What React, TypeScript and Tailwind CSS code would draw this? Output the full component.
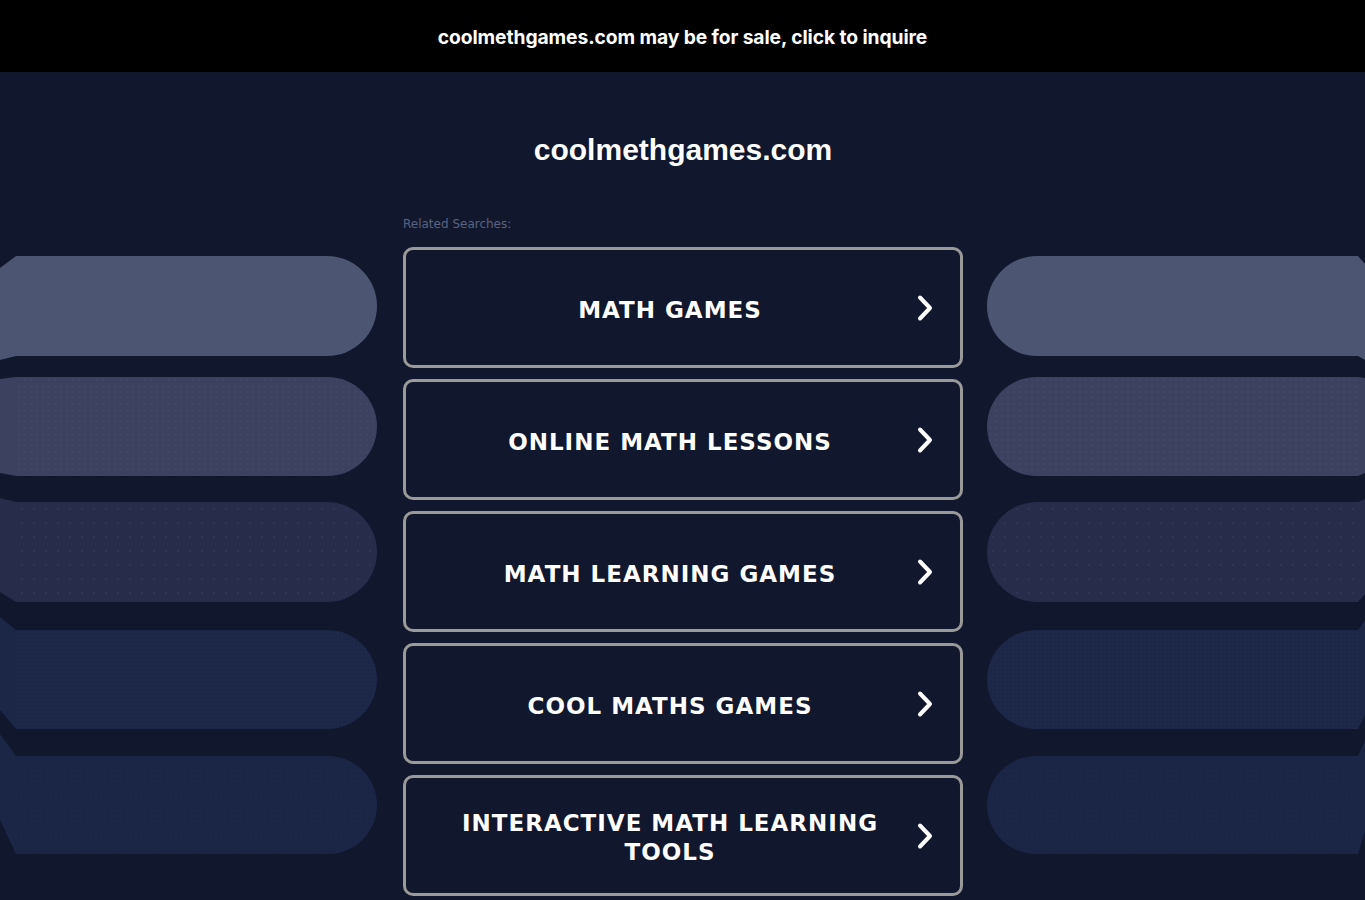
import React from 'react'

const searches = ['MATH GAMES', 'ONLINE MATH LESSONS', 'MATH LEARNING GAMES', 'COOL MATHS GAMES', 'INTERACTIVE MATH LEARNING TOOLS']

// decorative side pills: height, gap above, colour, edge slants at the screen border
const pills = [
  { h: 100, mt: 0, bg: 'bg-[#4c5673]', fill: '#4c5673', l: [12, 104], r: [8, 104], dots: '' },
  { h: 99, mt: 21, bg: 'bg-[#3b415f]', fill: '#3b415f', l: [2, 96], r: [1, 96], dots: 'bg-[radial-gradient(rgba(255,255,255,0.06)_0.6px,transparent_0.8px)] bg-[length:6px_6px]' },
  { h: 100, mt: 26, bg: 'bg-[#262c4a]', fill: '#262c4a', l: [-4, 90], r: [-3, 92], dots: 'bg-[radial-gradient(rgba(255,255,255,0.06)_0.6px,transparent_0.8px)] bg-[length:12px_14px]' },
  { h: 99, mt: 28, bg: 'bg-[#1c2647]', fill: '#1c2647', l: [-13, 80], r: [-10, 85], dots: 'bg-[radial-gradient(rgba(255,255,255,0.03)_0.6px,transparent_0.8px)] bg-[length:4px_4px]' },
  { h: 98, mt: 27, bg: 'bg-[#1b2647]', fill: '#1b2647', l: [-22, 64], r: [-16, 75], dots: 'bg-[radial-gradient(rgba(0,0,0,0.15)_0.6px,transparent_0.8px)] bg-[length:5px_5px]' },
]

function Chevron() {
  return (
    <svg width="16" height="27" viewBox="0 0 16 27" className="absolute right-[27px] top-1/2 -translate-y-1/2">
      <polyline points="3,3 13,13.5 3,24" fill="none" stroke="white" strokeWidth="4" strokeLinecap="round" strokeLinejoin="round" />
    </svg>
  )
}

function LeftPills() {
  return (
    <div className="flex w-[377px] shrink-0 flex-col pt-[184px]">
      {pills.map((p, i) => (
        <div key={i} className={`relative ml-[16px] w-[361px] rounded-r-full ${p.bg}`} style={{ height: p.h, marginTop: p.mt }}>
          <div className={`h-full w-full rounded-r-full ${p.dots}`} />
          <svg width="16" height={p.h} className="absolute left-[-16px] top-0 overflow-visible">
            <polygon points={`0,${p.l[0]} 16,0 16,${p.h} 0,${p.l[1]}`} fill={p.fill} />
          </svg>
        </div>
      ))}
    </div>
  )
}

function RightPills() {
  return (
    <div className="flex flex-1 flex-col pt-[184px]">
      {pills.map((p, i) => (
        <div key={i} className={`relative w-[371px] rounded-l-full ${p.bg}`} style={{ height: p.h, marginTop: p.mt }}>
          <div className={`h-full w-full rounded-l-full ${p.dots}`} />
          <svg width="7" height={p.h} className="absolute left-full top-0 overflow-visible">
            <polygon points={`0,0 7,${p.r[0]} 7,${p.r[1]} 0,${p.h}`} fill={p.fill} />
          </svg>
        </div>
      ))}
    </div>
  )
}

export default function App() {
  return (
    <div className="min-h-[900px] overflow-hidden bg-[#11172c]">
      <div className="flex h-[72px] items-center justify-center bg-black pt-[3px]">
        <a className="text-[19.3px] font-bold tracking-[-0.1px] text-white" style={{ fontFamily: 'Inter, "Liberation Sans", sans-serif' }}>
          coolmethgames.com may be for sale, click to inquire
        </a>
      </div>

      <div className="flex">
        <LeftPills />

        <div className="ml-[26px] w-[560px] shrink-0">
          <h1
            className="mt-[60px] h-[36px] text-center text-[30px] font-bold leading-[36px] text-white"
            style={{ fontFamily: '"Liberation Sans", Arial, sans-serif' }}
          >
            coolmethgames.com
          </h1>
          <p className="mt-[48px] text-[12px] leading-[16px] text-[#5a6482]" style={{ fontFamily: '"DejaVu Sans", Verdana, sans-serif' }}>
            Related Searches:
          </p>
          <div className="mt-[15px] flex flex-col gap-[11px]" style={{ fontFamily: '"DejaVu Sans", Verdana, sans-serif' }}>
            {searches.map((s) => (
              <a
                key={s}
                className="relative flex h-[121px] items-center justify-center rounded-[10px] border-[3px] border-[#9a9a9a] pl-[47px] pr-[73px] pt-[5px] text-center text-[23px] font-bold leading-[29px] tracking-[1px] text-white"
              >
                {s}
                <Chevron />
              </a>
            ))}
          </div>
        </div>

        <div className="ml-[24px] flex flex-1">
          <RightPills />
        </div>
      </div>
    </div>
  )
}
